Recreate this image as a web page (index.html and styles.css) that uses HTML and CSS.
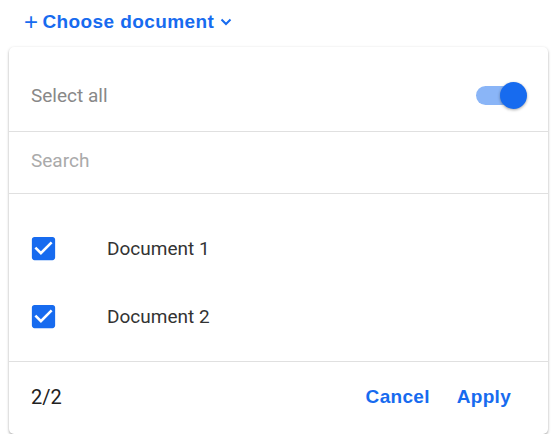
FILE: index.html
```html
<!DOCTYPE html>
<html>

<head>
    <meta name="viewport" content="width=device-width, initial-scale=1.0">
    <title>Choose document</title>
    <link rel="stylesheet" href="styles.css">
</head>

<body>

    <button class="trigger">
        <span class="plus">+</span>Choose document
        <svg class="chevron" width="12" height="8" viewBox="0 0 12 8">
            <path d="M1.5 1.5 L6 6 L10.5 1.5" fill="none" stroke="currentColor" stroke-width="2" />
        </svg>
    </button>

    <div class="panel">
        <div class="row select-all">
            <span>Select all</span>
            <span class="switch"><span class="knob"></span></span>
        </div>
        <div class="row search">
            <input class="search-input" placeholder="Search" />
        </div>
        <ul class="docs">
            <li>
                <svg class="check" width="31" height="31" viewBox="0 0 24 24">
                    <path d="M19 3H5c-1.11 0-2 .9-2 2v14c0 1.1.89 2 2 2h14c1.11 0 2-.9 2-2V5c0-1.1-.89-2-2-2zm-9 14l-5-5 1.41-1.41L10 14.17l7.59-7.59L19 8l-9 9z" />
                </svg>
                Document 1
            </li>
            <li>
                <svg class="check" width="31" height="31" viewBox="0 0 24 24">
                    <path d="M19 3H5c-1.11 0-2 .9-2 2v14c0 1.1.89 2 2 2h14c1.11 0 2-.9 2-2V5c0-1.1-.89-2-2-2zm-9 14l-5-5 1.41-1.41L10 14.17l7.59-7.59L19 8l-9 9z" />
                </svg>
                Document 2
            </li>
        </ul>
        <div class="footer">
            <span class="count">2/2</span>
            <div class="actions">
                <button>Cancel</button>
                <button>Apply</button>
            </div>
        </div>
    </div>

</body>

</html>
```

FILE: styles.css
```css
body {
    margin: 0;
    padding: 0 9px;
    font-family: Roboto, "Liberation Sans", sans-serif;
    background: #fff;
}

.trigger {
    display: flex;
    align-items: center;
    height: 44px;
    padding: 0 0 0 15px;
    border: none;
    background: none;
    color: #176bef;
    font-family: "Liberation Sans", Arial, sans-serif;
    font-weight: bold;
    font-size: 19px;
    letter-spacing: 0.4px;
    margin-bottom: 3px;
}

.plus {
    font-weight: normal;
    font-size: 24px;
    margin-right: 4px;
    line-height: 1;
}

.chevron {
    margin-left: 6px;
}

.panel {
    width: 539px;
    border-radius: 5px;
    box-shadow: 0 1px 3px rgba(0, 0, 0, 0.25), 0 2px 2px rgba(0, 0, 0, 0.12);
    background: #fff;
}

.row {
    display: flex;
    align-items: center;
    box-sizing: border-box;
    padding: 0 21px 0 22px;
    border-bottom: 1px solid #e0e0e0;
}

.select-all {
    height: 85px;
    padding-top: 12px;
    justify-content: space-between;
    font-size: 19px;
    color: #888;
}

.switch {
    position: relative;
    width: 36px;
    height: 19px;
    border-radius: 10px;
    background: #8ab5f7;
    margin-right: 15px;
}

.knob {
    position: absolute;
    right: -15px;
    top: -4px;
    width: 27px;
    height: 27px;
    border-radius: 50%;
    background: #176bef;
    box-shadow: 0 1px 3px rgba(0, 0, 0, 0.35);
}

.search {
    height: 62px;
    padding-bottom: 4px;
}

.search-input {
    border: none;
    padding: 0;
    font-family: inherit;
    font-size: 19px;
    width: 100%;
}

.search-input::placeholder {
    color: #aaa;
}

.search-input:focus {
    outline: none;
}

.docs {
    list-style-type: none;
    margin: 0;
    padding: 20px 0 11px;
    border-bottom: 1px solid #e0e0e0;
}

.docs>li {
    display: flex;
    align-items: center;
    height: 68px;
    padding-left: 19px;
    font-size: 19px;
    color: #333;
}

.check {
    fill: #176bef;
    margin-right: 48px;
}

.footer {
    display: flex;
    align-items: center;
    justify-content: space-between;
    height: 70px;
    padding: 0 37px 2px 22px;
}

.count {
    font-size: 20px;
    color: #222;
}

.actions {
    display: flex;
    gap: 27px;
}

.actions>button {
    border: none;
    background: none;
    padding: 0;
    color: #176bef;
    font-family: "Liberation Sans", Arial, sans-serif;
    font-weight: bold;
    font-size: 19px;
    letter-spacing: 0.3px;
}
```
